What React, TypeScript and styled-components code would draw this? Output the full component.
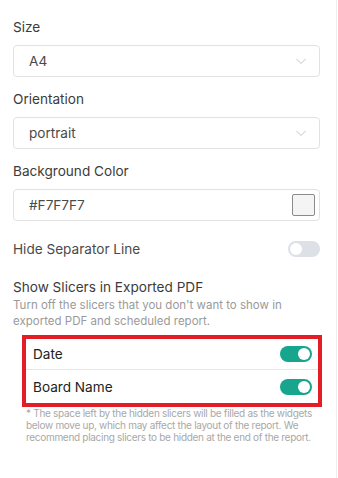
import React from "react";
import styled, { createGlobalStyle } from "styled-components";

const GlobalStyle = createGlobalStyle`
  html, body {
    margin: 0;
    padding: 0;
    background: #ffffff;
  }
  body {
    font-family: Inter, "Noto Sans", sans-serif;
  }
`;

const Panel = styled.div`
  width: 337px;
  height: 478px;
  box-sizing: border-box;
  border-right: 1px solid #efefef;
  padding: 17px 16px 0 13px;
  display: flex;
  flex-direction: column;
`;

const Label = styled.div<{ $gap?: number }>`
  font-size: 13.6px;
  line-height: 20px;
  color: #3b3b3b;
  margin-top: ${(p) => p.$gap ?? 0}px;
`;

const Field = styled.div`
  margin-top: 8px;
  height: 32px;
  box-sizing: border-box;
  border: 1px solid #e2e2e2;
  border-radius: 4px;
  display: flex;
  align-items: center;
  justify-content: space-between;
  padding: 0 4px 0 15px;
  font-size: 13.6px;
  color: #4a4a4a;
`;

const Chevron = styled.svg`
  width: 12px;
  height: 12px;
  margin-right: 8px;
`;

const Swatch = styled.div`
  width: 23px;
  height: 22px;
  box-sizing: border-box;
  border: 1px solid #8a8a8a;
  border-radius: 2px;
  background: #f4f4f4;
`;

const SwitchRow = styled.div`
  margin-top: 18px;
  display: flex;
  align-items: center;
  justify-content: space-between;
  font-size: 13.6px;
  line-height: 20px;
  color: #4a4a4a;
`;

const Toggle = styled.div<{ $on?: boolean }>`
  width: 32px;
  height: 16px;
  border-radius: 8px;
  background: ${(p) => (p.$on ? "#17a58e" : "#dde0e6")};
  position: relative;
  flex-shrink: 0;

  &::after {
    content: "";
    position: absolute;
    top: 2px;
    left: ${(p) => (p.$on ? "18px" : "2px")};
    width: 12px;
    height: 12px;
    border-radius: 50%;
    background: #ffffff;
  }
`;

const Description = styled.div`
  font-size: 11.5px;
  line-height: 16px;
  color: #9a9a9a;
`;

const SlicerBox = styled.div`
  margin: 6px -2px 0 9px;
  border: 4px solid #e31c25;
  display: flex;
  flex-direction: column;
`;

const SlicerRow = styled.div<{ $height: number }>`
  height: ${(p) => p.$height}px;
  display: flex;
  align-items: center;
  justify-content: space-between;
  padding: 0 6px 0 7px;
  font-size: 13.6px;
  color: #222;
  & + & {
    border-top: 1px solid #e6e6e6;
  }
`;

const Note = styled.div`
  margin: 0 -6px 0 13px;
  font-size: 10px;
  letter-spacing: -0.3px;
  line-height: 12px;
  color: #a8a8a8;
`;

const ChevronDown = () => (
  <Chevron viewBox="0 0 12 12" fill="none">
    <path d="M1.5 4l4.5 4.5L10.5 4" stroke="#c4c4c4" strokeWidth="1" />
  </Chevron>
);

export default function App() {
  return (
    <>
      <GlobalStyle />
      <Panel>
        <Label>Size</Label>
        <Field>
          A4
          <ChevronDown />
        </Field>
        <Label $gap={12}>Orientation</Label>
        <Field>
          portrait
          <ChevronDown />
        </Field>
        <Label $gap={12}>Background Color</Label>
        <Field>
          #F7F7F7
          <Swatch />
        </Field>
        <SwitchRow>
          Hide Separator Line
          <Toggle />
        </SwitchRow>
        <Label $gap={18}>Show Slicers in Exported PDF</Label>
        <Description>
          Turn off the slicers that you don't want to show in exported PDF and
          scheduled report.
        </Description>
        <SlicerBox>
          <SlicerRow $height={30}>
            Date
            <Toggle $on />
          </SlicerRow>
          <SlicerRow $height={33}>
            Board Name
            <Toggle $on />
          </SlicerRow>
        </SlicerBox>
        <Note>
          * The space left by the hidden slicers will be filled as the widgets
          below move up, which may affect the layout of the report. We
          recommend placing slicers to be hidden at the end of the report.
        </Note>
      </Panel>
    </>
  );
}
